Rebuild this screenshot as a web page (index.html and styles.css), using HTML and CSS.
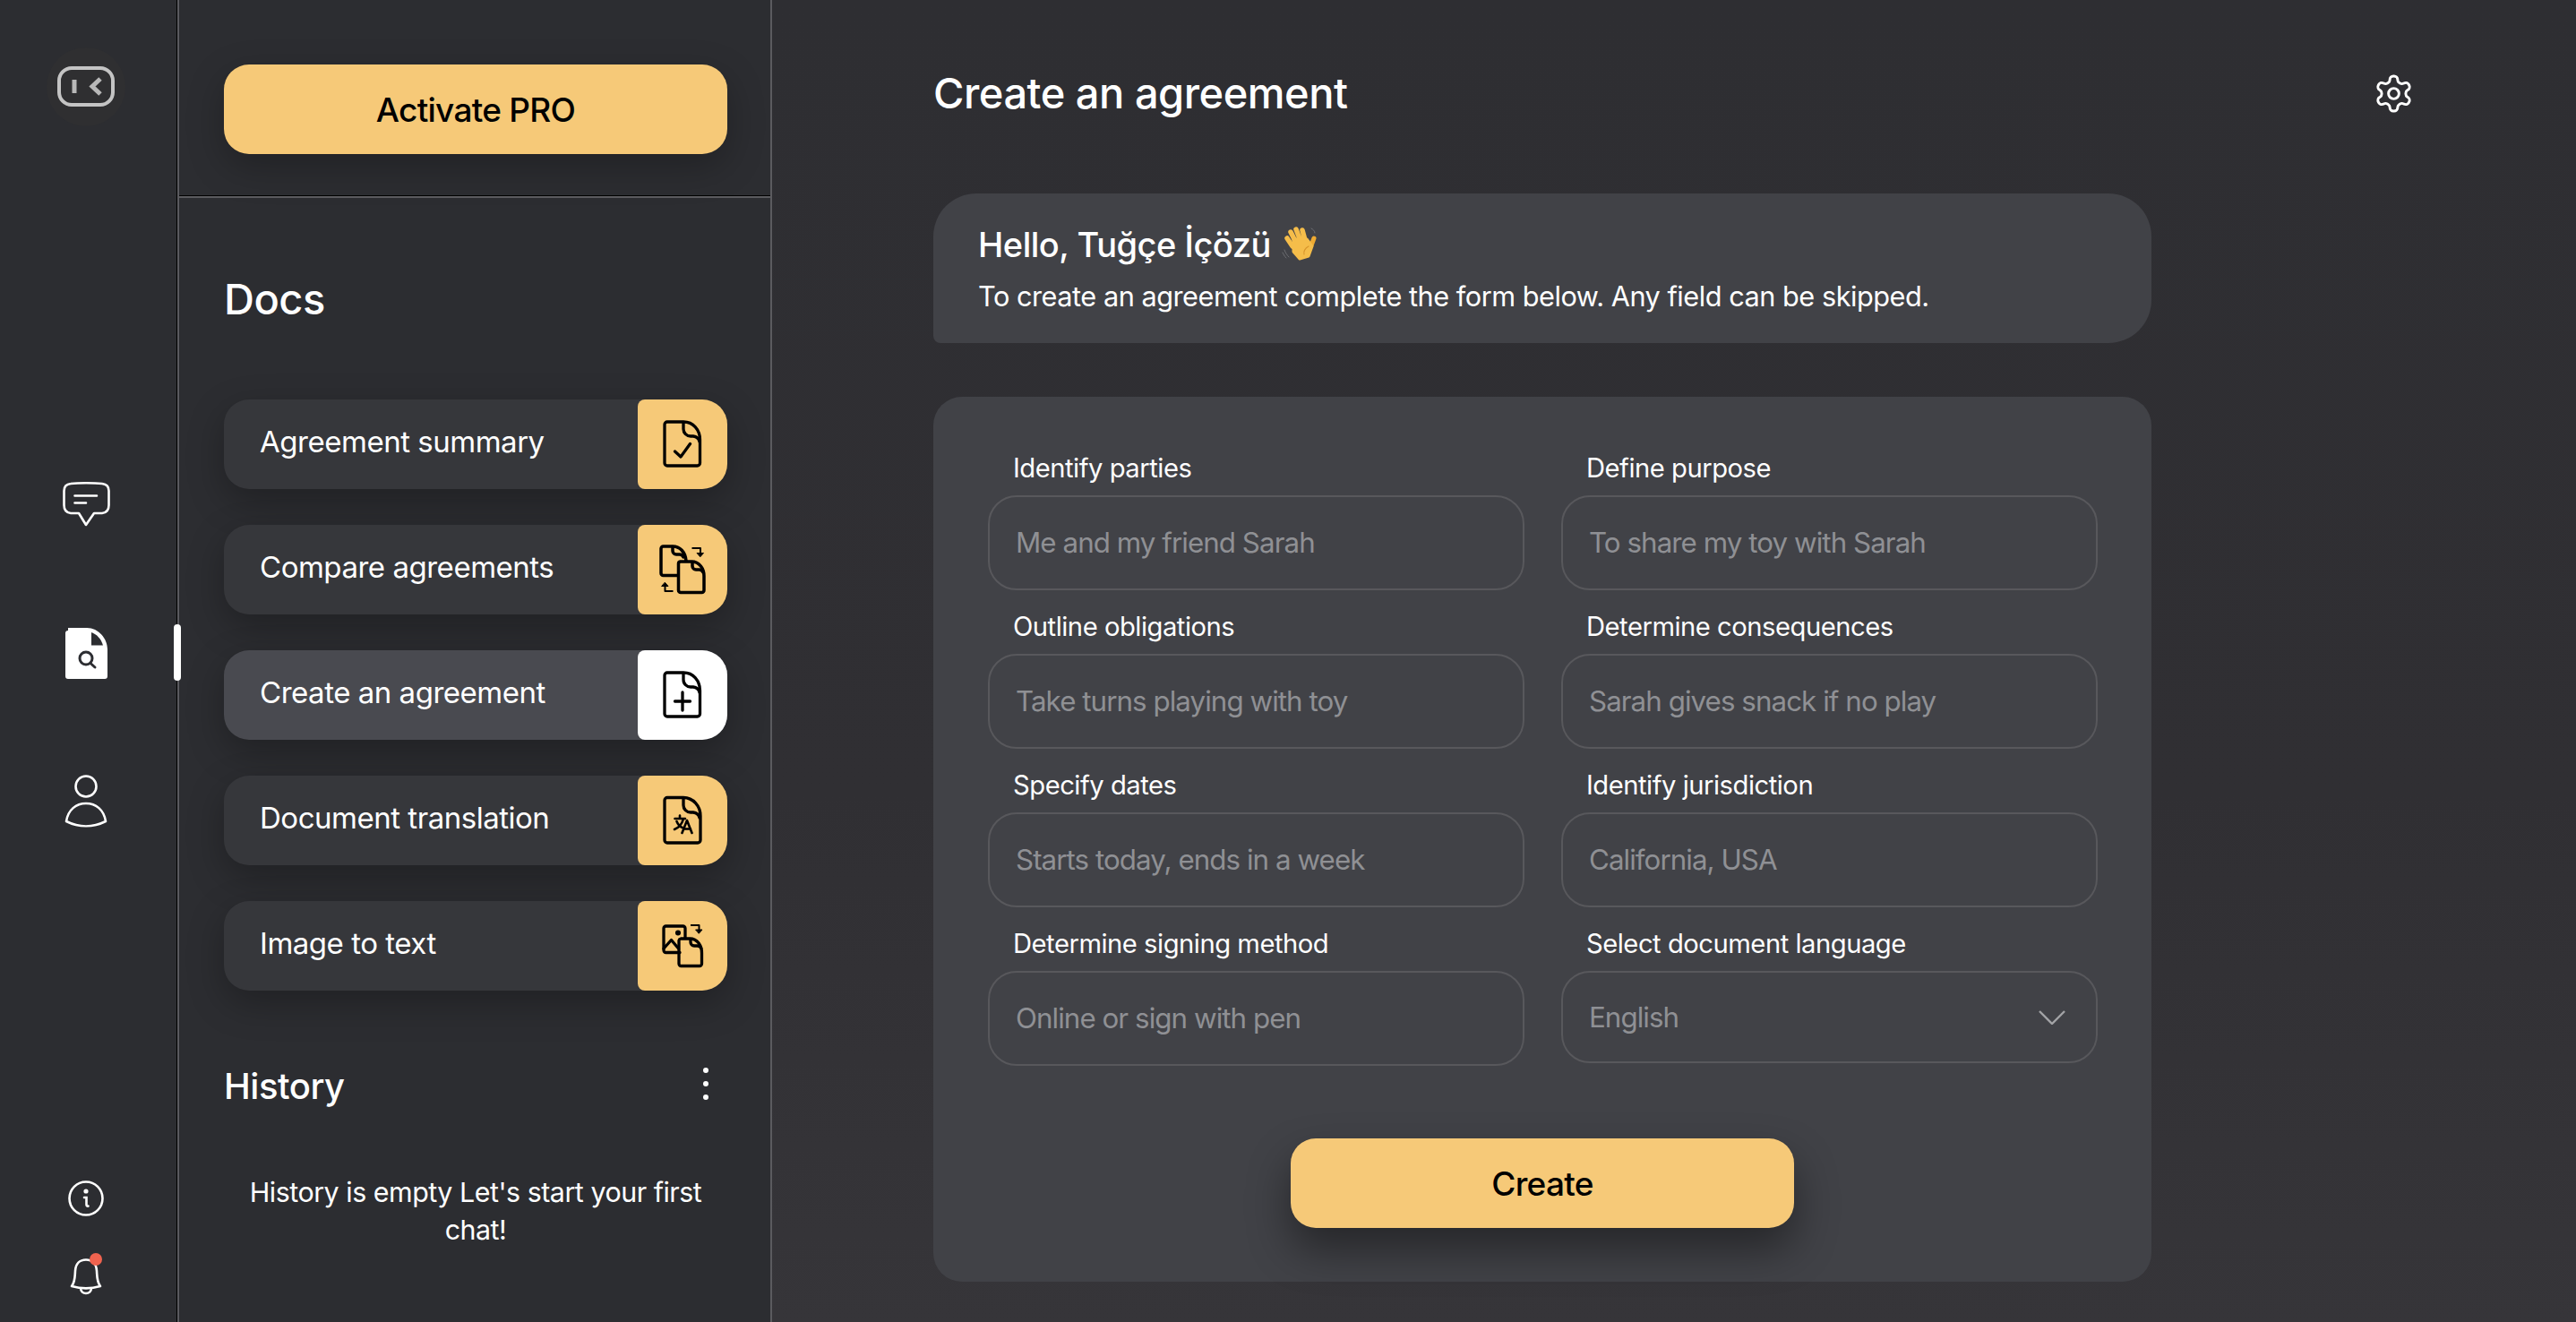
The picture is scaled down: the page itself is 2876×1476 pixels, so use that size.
FILE: index.html
```html
<!DOCTYPE html>
<html lang="en">
<head>
<meta charset="utf-8">
<title>Create an agreement</title>
<link rel="stylesheet" href="styles.css">
</head>
<body>
<div class="app">
  <nav class="rail">
    <div class="logo">
      <svg class="logo-svg" viewBox="0 0 64 46" fill="none" stroke="#c4c4c4" stroke-width="4"><rect x="2" y="2" width="60" height="41" rx="14"/><path d="M19 15v15" stroke-width="5" stroke="#b8b8b8"/><path d="M48 14l-9 8.500 9 8.500" stroke-width="5" stroke="#b8b8b8"/></svg>
    </div>
    <div class="rail-main">
      <svg class="rail-icon" viewBox="0 0 60 60" fill="none" stroke="#fff" stroke-width="2.600" stroke-linecap="round" stroke-linejoin="round"><path d="M13 7C21 6 39 6 48 7 53 7.500 55.500 10 55.500 15V31C55.500 37 53 39.500 48 40H39L30 53 22 40H13C8 39.500 5.500 37 5.500 31V15C5.500 10 8 7.500 13 7Z"/><path d="M17.500 20.500H42M17.500 28.500H30"/></svg>
      <svg class="rail-icon" viewBox="0 0 60 60"><path fill="#fff" d="M10 5a3 3 0 0 0-3 3v48a3 3 0 0 0 3 3h41a3 3 0 0 0 3-3V26C54 14 44 2 31 2H10Z"/><path fill="#2c2d31" d="M36 7c6 2 11 7.500 13 14.500H36Z"/><circle cx="30" cy="36" r="7" fill="none" stroke="#2c2d31" stroke-width="3"/><path d="M35 41.500l5 4.500" stroke="#2c2d31" stroke-width="3" stroke-linecap="round"/></svg>
      <svg class="rail-icon" viewBox="0 0 60 60" fill="none" stroke="#fff" stroke-width="2.600" stroke-linejoin="round"><circle cx="30" cy="13" r="11.500"/><path d="M8 52C10 39 19 32 30 32S50 39 52 52C38 59 22 59 8 52Z"/></svg>
    </div>
    <div class="rail-foot">
      <svg class="rail-icon" viewBox="0 0 60 60" fill="none" stroke="#fff" stroke-width="2.600"><circle cx="30" cy="30" r="18.500"/><circle cx="30" cy="22" r="1.300" fill="#fff"/><path d="M28 29h2.500v8c0 1.500 1 2 2 1.500" stroke-linecap="round"/></svg>
      <div class="bell">
        <svg class="rail-icon" viewBox="0 0 60 60" fill="none" stroke="#fff" stroke-width="2.600" stroke-linejoin="round"><path d="M14 40C18 35 17.500 30 18 23 18.500 15 23 10.500 30 10.500S41.500 15 42 23C42.500 30 42 35 46 40 36 43 24 43 14 40Z"/><path d="M24 42C24 50 36 50 36 42"/></svg>
        <span class="bell-dot"></span>
      </div>
    </div>
    <span class="rail-marker"></span>
  </nav>

  <aside class="side">
    <div class="promo"><button class="cta">Activate PRO</button></div>
    <div class="docs">
      <h2 class="docs-title">Docs</h2>
      <ul class="menu">
        <li class="item"><span class="item-label">Agreement summary</span><span class="tile">
          <svg class="tile-svg" viewBox="0 0 60 60" fill="none" stroke="#000" stroke-width="3.300" stroke-linecap="round" stroke-linejoin="round"><path d="M13 5H31C42 5 49.500 14 49.500 25V51a3 3 0 0 1-3 3H13a3 3 0 0 1-3-3V8a3 3 0 0 1 3-3Z"/><path d="M31 5.500V13a8 8 0 0 0 8 8h3a8 8 0 0 1 7 6"/><path d="M21.500 38l6.500 6 10.500-14.500"/></svg>
        </span></li>
        <li class="item"><span class="item-label">Compare agreements</span><span class="tile">
          <svg class="tile-svg" viewBox="0 0 60 60" fill="none" stroke="#000" stroke-width="3.500" stroke-linecap="round" stroke-linejoin="round"><path d="M34 20C33 10 27 4 19 4H8.500a2.500 2.500 0 0 0-2.500 2.500V34a2.500 2.500 0 0 0 2.500 2.500H24"/><path d="M19 4.500V9a4 4 0 0 0 4 4h3a5 5 0 0 1 5 3"/><path d="M27.500 21H40C49 21 54 29 54 37V53a2.500 2.500 0 0 1-2.500 2.500H28a2.500 2.500 0 0 1-2.500-2.500V23.500A2.500 2.500 0 0 1 27.500 21Z"/><path d="M41 21.500V26a4 4 0 0 0 4 4h3a5 5 0 0 1 5 3"/><path d="M40.500 6h9.500v7" stroke-linecap="butt" stroke-width="2"/><path d="M46.500 11.500h7L50 15.500Z" fill="#000" stroke-width="1"/><path d="M19.500 54h-9v-7" stroke-linecap="butt" stroke-width="2"/><path d="M7 48.500h7L10.500 44.500Z" fill="#000" stroke-width="1"/></svg>
        </span></li>
        <li class="item item-active"><span class="item-label">Create an agreement</span><span class="tile tile-active">
          <svg class="tile-svg" viewBox="0 0 60 60" fill="none" stroke="#000" stroke-width="3.300" stroke-linecap="round" stroke-linejoin="round"><path d="M13 5H31C42 5 49.500 14 49.500 25V51a3 3 0 0 1-3 3H13a3 3 0 0 1-3-3V8a3 3 0 0 1 3-3Z"/><path d="M31 5.500V13a8 8 0 0 0 8 8h3a8 8 0 0 1 7 6"/><path d="M30 27v20M21.500 37h17"/></svg>
        </span></li>
        <li class="item"><span class="item-label">Document translation</span><span class="tile">
          <svg class="tile-svg" viewBox="0 0 60 60" fill="none" stroke="#000" stroke-width="3.300" stroke-linecap="round" stroke-linejoin="round"><path d="M13 4.500H31C42 4.500 50 14 50 25V52a3 3 0 0 1-3 3H13a3 3 0 0 1-3-3V7.500a3 3 0 0 1 3-3Z"/><path d="M31 5V13a8 8 0 0 0 8 8h3a8 8 0 0 1 7 6"/><path d="M21.500 28H33M27 24.500V28M31 28C29.500 34 26 38 21 40M23.500 31C25 35 28 37.500 31 38.500M29.500 44l5.500-14 5.500 14M31.500 39.500h7.500" stroke-width="2.600"/></svg>
        </span></li>
        <li class="item"><span class="item-label">Image to text</span><span class="tile">
          <svg class="tile-svg" viewBox="0 0 60 60" fill="none" stroke="#000" stroke-width="3.300" stroke-linecap="round" stroke-linejoin="round"><path d="M27 37.500H11.500A2.500 2.500 0 0 1 9 35V10.500A2.500 2.500 0 0 1 11.500 8H30.500A2.500 2.500 0 0 1 33 10.500V21"/><path d="M9 33L17.500 23.500 25.500 33"/><circle cx="25" cy="15.500" r="1.400" fill="#000"/><path d="M28 22H38C47 22 51.500 30 51.500 38V50a2.500 2.500 0 0 1-2.500 2.500H28.500A2.500 2.500 0 0 1 26 50V24A2.500 2.500 0 0 1 28 22Z"/><path d="M39 22.500V26a4 4 0 0 0 4 4h3a5 5 0 0 1 5 3"/><path d="M39 7h9.500v7" stroke-linecap="butt" stroke-width="2"/><path d="M45 12h7L48.500 16Z" fill="#000" stroke-width="1"/></svg>
        </span></li>
      </ul>
      <div class="history-head">
        <h3 class="history-title">History</h3>
        <span class="dots"><i></i><i></i><i></i></span>
      </div>
      <p class="history-empty">History is empty Let's start your first chat!</p>
    </div>
  </aside>

  <main class="main">
    <header class="head">
      <h1 class="title">Create an agreement</h1>
      <svg class="gear" viewBox="0 0 24 24" fill="none" stroke="#fff" stroke-width="1.500" stroke-linecap="round" stroke-linejoin="round"><path d="M12.220 2h-.44a2 2 0 0 0-2 2v.18a2 2 0 0 1-1 1.730l-.43.25a2 2 0 0 1-2 0l-.15-.08a2 2 0 0 0-2.730.73l-.22.38a2 2 0 0 0 .73 2.730l.15.1a2 2 0 0 1 1 1.720v.51a2 2 0 0 1-1 1.740l-.15.09a2 2 0 0 0-.73 2.730l.22.38a2 2 0 0 0 2.730.73l.15-.08a2 2 0 0 1 2 0l.43.25a2 2 0 0 1 1 1.730V20a2 2 0 0 0 2 2h.44a2 2 0 0 0 2-2v-.18a2 2 0 0 1 1-1.730l.43-.25a2 2 0 0 1 2 0l.15.08a2 2 0 0 0 2.730-.73l.22-.39a2 2 0 0 0-.73-2.730l-.15-.08a2 2 0 0 1-1-1.740v-.5a2 2 0 0 1 1-1.740l.15-.09a2 2 0 0 0 .73-2.730l-.22-.38a2 2 0 0 0-2.730-.73l-.15.08a2 2 0 0 1-2 0l-.43-.25a2 2 0 0 1-1-1.730V4a2 2 0 0 0-2-2z"/><circle cx="12" cy="12" r="3"/></svg>
    </header>

    <section class="hello">
      <p class="hello-name">Hello, Tuğçe İçözü
        <svg class="wave" viewBox="0 0 40 40" fill="none" stroke-linecap="round"><path d="M3 26c1 3 3 6 5 8M1 29c1 2 2 4 4 6M33 2c2 1 4 3 4 5" stroke="#6d6e72" stroke-width="1"/><path d="M12 22L6 13M16 18L10 6M21 16L16 3M26 15L23 4" stroke="#f5bd4a" stroke-width="5.500"/><path d="M33 21l3-8" stroke="#eeaa32" stroke-width="5"/><path d="M13 14L28 14 34 22 30 33 20 36 13 28Z" fill="#f5bd4a" stroke="#f5bd4a" stroke-width="3" stroke-linejoin="round"/><path d="M30 22c-4 2-6 6-5 9" stroke="#d9962c" stroke-width="1.200"/></svg>
      </p>
      <p class="hello-sub">To create an agreement complete the form below. Any field can be skipped.</p>
    </section>

    <section class="form">
      <div class="fields">
        <label class="field"><span class="field-label">Identify parties</span><input class="input" placeholder="Me and my friend Sarah"></label>
        <label class="field"><span class="field-label">Define purpose</span><input class="input" placeholder="To share my toy with Sarah"></label>
        <label class="field"><span class="field-label">Outline obligations</span><input class="input" placeholder="Take turns playing with toy"></label>
        <label class="field"><span class="field-label">Determine consequences</span><input class="input" placeholder="Sarah gives snack if no play"></label>
        <label class="field"><span class="field-label">Specify dates</span><input class="input" placeholder="Starts today, ends in a week"></label>
        <label class="field"><span class="field-label">Identify jurisdiction</span><input class="input" placeholder="California, USA"></label>
        <label class="field"><span class="field-label">Determine signing method</span><input class="input" placeholder="Online or sign with pen"></label>
        <div class="field"><span class="field-label">Select document language</span>
          <div class="select"><span>English</span><svg class="chev" viewBox="0 0 30 16" fill="none" stroke="#a2a3a6" stroke-width="2.400"><path d="M1 1l14 14L29 1"/></svg></div>
        </div>
      </div>
      <button class="cta cta-create">Create</button>
    </section>
  </main>
</div>
</body>
</html>
```
FILE: styles.css
```css
* { box-sizing: border-box; }
html, body { margin: 0; height: 100%; }
body {
  background: #2c2d31;
  color: #fff;
  font-family: "Inter", "Liberation Sans", sans-serif;
  letter-spacing: -.03em;
  overflow: hidden;
}
h1, h2, h3, p, ul { margin: 0; padding: 0; }
ul { list-style: none; }

.app { display: flex; width: 2876px; height: 1476px; }

/* icon rail */
.rail {
  position: relative;
  width: 198px;
  flex: none;
  display: flex;
  flex-direction: column;
  align-items: center;
  padding: 53px 6px 20px 0;
  border-right: 1px solid #000;
  background: #2c2d31;
}
.logo {
  width: 88px;
  height: 88px;
  border-radius: 50%;
  background: #2f2f31;
  display: flex;
  align-items: center;
  justify-content: center;
}
.logo-svg { width: 64px; height: 46px; }
.rail-main {
  margin-top: 392px;
  display: flex;
  flex-direction: column;
  gap: 106px;
}
.rail-foot {
  margin-top: auto;
  display: flex;
  flex-direction: column;
  gap: 28px;
}
.rail-icon { display: block; width: 60px; height: 60px; }
.bell { position: relative; }
.bell-dot {
  position: absolute;
  top: 3px;
  left: 34px;
  width: 14px;
  height: 14px;
  border-radius: 50%;
  background: #f0634f;
}
.rail-marker {
  position: absolute;
  left: 194px;
  top: 697px;
  width: 8px;
  height: 63px;
  border-radius: 4px;
  background: #fff;
  z-index: 2;
}

/* sidebar */
.side {
  width: 664px;
  flex: none;
  display: flex;
  flex-direction: column;
  border-left: 2px solid #5b5b5f;
  border-right: 2px solid #5b5b5f;
  background: #2c2d31;
}
.promo {
  height: 219px;
  padding: 72px 48px 0 50px;
  border-bottom: 1px solid #000;
}
.cta {
  display: block;
  width: 100%;
  height: 100px;
  padding: 0;
  border: 0;
  border-radius: 28px;
  background: #f6c978;
  color: #000;
  font: 500 37px "Inter", "Liberation Sans", sans-serif;
  letter-spacing: -.02em;
  box-shadow: 0 14px 40px rgba(0, 0, 0, .25);
}
.docs {
  flex: 1;
  border-top: 2px solid #5b5b5f;
  padding: 85px 48px 0 50px;
}
.docs-title { font-size: 47px; font-weight: 500; line-height: 56px; }
.menu {
  margin-top: 84px;
  display: flex;
  flex-direction: column;
  gap: 40px;
}
.item {
  height: 100px;
  display: flex;
  align-items: center;
  justify-content: space-between;
  padding-left: 40px;
  border-radius: 28px;
  background: #36373b;
  box-shadow: 0 14px 40px rgba(0, 0, 0, .27);
}
.item-active { background: #494a50; }
.item-label { font-size: 33px; font-weight: 400; color: #fff; padding-bottom: 6px; }
.tile {
  width: 100px;
  height: 100px;
  flex: none;
  display: flex;
  align-items: center;
  justify-content: center;
  background: #f6c978;
  border-radius: 8px 28px 28px 8px;
}
.tile-active { background: #fff; }
.tile-svg { width: 60px; height: 60px; }
.history-head {
  margin-top: 82px;
  display: flex;
  align-items: center;
  justify-content: space-between;
  height: 50px;
  padding-right: 21px;
}
.history-title { font-size: 40px; font-weight: 500; line-height: 50px; }
.dots { display: flex; flex-direction: column; gap: 9px; margin-top: -6px; }
.dots i { display: block; width: 6px; height: 6px; border-radius: 50%; background: #fff; }
.history-empty {
  margin-top: 72px;
  padding: 0 20px;
  text-align: center;
  font-size: 30.400px;
  line-height: 42px;
}

/* main */
.main {
  flex: 1;
  padding: 74px 0 0 180px;
  background: linear-gradient(180deg, #2e2e32 0%, #302f33 60%, #363539 100%);
}
.head {
  width: 1650px;
  height: 60px;
  display: flex;
  align-items: center;
  justify-content: space-between;
}
.title { font-size: 47px; font-weight: 500; line-height: 60px; }
.gear { width: 47px; height: 47px; margin-right: -4px; }
.hello {
  width: 1360px;
  height: 167px;
  margin-top: 82px;
  padding: 34px 50px 0;
  background: #414247;
  border-radius: 48px 48px 48px 8px;
}
.hello-name {
  display: flex;
  align-items: center;
  gap: 12px;
  font-size: 38px;
  font-weight: 500;
  line-height: 46px;
}
.wave { width: 40px; height: 40px; }
.hello-sub { margin-top: 15px; font-size: 30.700px; line-height: 40px; }
.form {
  width: 1360px;
  height: 988px;
  margin-top: 60px;
  padding: 60px 61px 0;
  background: #414247;
  border-radius: 32px;
}
.fields {
  display: grid;
  grid-template-columns: 599px 599px;
  column-gap: 41px;
  row-gap: 21px;
}
.field { display: block; }
.field-label {
  display: block;
  height: 50px;
  padding-left: 28px;
  font-size: 29.200px;
  line-height: 40px;
}
.input, .select {
  display: flex;
  align-items: center;
  width: 100%;
  height: 106px;
  padding: 0 29px;
  border: 2px solid #58585c;
  border-radius: 32px;
  background: transparent;
  color: #8f9094;
  font: 400 31.300px "Inter", "Liberation Sans", sans-serif;
  letter-spacing: -.03em;
  outline: none;
}
.input::placeholder { color: #8f9094; opacity: 1; }
.select { height: 103px; justify-content: space-between; }
.chev { width: 30px; height: 16px; margin-right: 5px; }
.cta-create {
  width: 562px;
  margin: 81px auto 0;
  box-shadow: 0 24px 48px rgba(0, 0, 0, .42);
}
```
